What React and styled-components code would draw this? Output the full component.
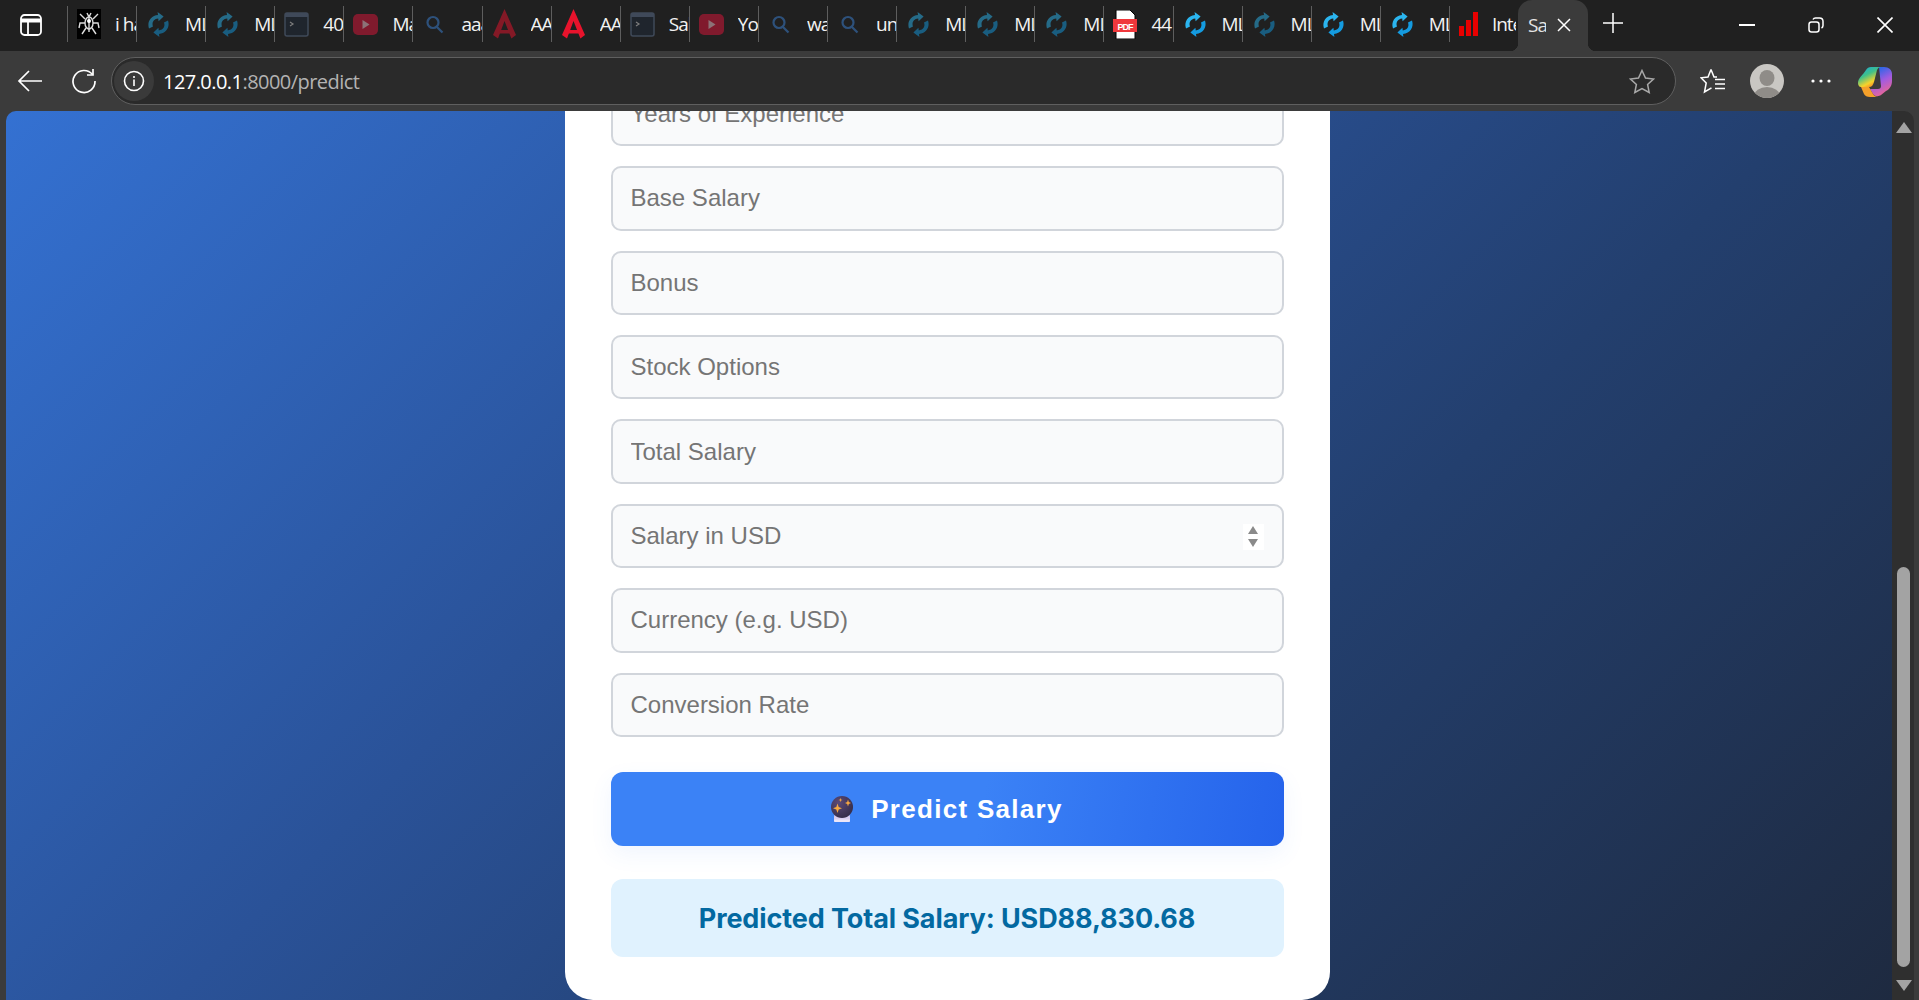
import styled, { createGlobalStyle } from "styled-components";

const GlobalStyle = createGlobalStyle`
  * { box-sizing: border-box; }
  html, body { margin: 0; height: 100%; overflow: hidden; background: #3b3b3b; }
  body { font-family: "Liberation Sans", Arial, sans-serif; }
`;

const Shell = styled.div`
  display: grid;
  grid-template-rows: 51px 60px 1fr;
  height: 100vh;
  width: 100vw;
`;

/* ---- tab strip ---- */
const Strip = styled.div`
  display: flex;
  align-items: stretch;
  background: #202020;
`;
const ToggleSlot = styled.div`
  width: 67px;
  display: flex;
  align-items: center;
  padding-left: 20px;
  padding-bottom: 2px;
`;
const Tab = styled.div`
  width: 69.1px;
  flex: none;
  display: flex;
  align-items: center;
  height: 36px;
  margin-top: 6px;
  padding-left: 9px;
  border-left: 1px solid #5e5e5e;
  overflow: hidden;
  color: #f2f2f2;
  font: 400 19px "Open Sans", sans-serif;
  letter-spacing: -1px;
  & > svg { flex: none; opacity: ${(p) => (p.$dim ? 0.5 : 1)}; }
`;
const TabLabel = styled.span`
  margin-left: 14px;
  width: 24px;
  overflow: hidden;
  white-space: nowrap;
`;
const ActiveTab = styled.div`
  position: relative;
  width: 70px;
  flex: none;
  display: flex;
  align-items: center;
  padding: 0 0 2px 10px;
  background: #3b3b3b;
  border-radius: 14px 14px 0 0;
  color: #e4e4e4;
  font: 400 19px "Open Sans", sans-serif;
  letter-spacing: -1px;
  &::before, &::after {
    content: "";
    position: absolute;
    bottom: 0;
    width: 8px;
    height: 8px;
  }
  &::before { left: -8px; background: radial-gradient(circle at 0 0, transparent 8px, #3b3b3b 8.5px); }
  &::after { right: -8px; background: radial-gradient(circle at 100% 0, transparent 8px, #3b3b3b 8.5px); }
`;
const ActiveLabel = styled.span`
  width: 18px;
  overflow: hidden;
  white-space: nowrap;
`;
const TabClose = styled.span`
  display: flex;
  margin-left: 11px;
`;
const NewTab = styled.div`
  display: flex;
  align-items: center;
  margin-left: 15px;
  padding-bottom: 5px;
`;
const WindowControls = styled.div`
  display: flex;
  margin-left: auto;
`;
const WindowButton = styled.div`
  width: 69px;
  display: flex;
  align-items: center;
  justify-content: center;
  padding-bottom: 2px;
`;

/* ---- toolbar ---- */
const Toolbar = styled.div`
  display: flex;
  align-items: center;
  background: #3b3b3b;
  padding-left: 8px;
`;
const NavButton = styled.div`
  width: 44px;
  height: 44px;
  display: flex;
  align-items: center;
  justify-content: center;
  margin-right: ${(p) => p.$gap || 0}px;
`;
const AddressBar = styled.div`
  width: 1565px;
  height: 48px;
  margin-left: 5px;
  display: flex;
  align-items: center;
  background: #2a2a2a;
  border: 1.5px solid #5f5f5f;
  border-radius: 24px;
  padding: 0 20px 0 2px;
`;
const InfoBadge = styled.div`
  width: 40px;
  height: 40px;
  border-radius: 50%;
  background: #3a3a3a;
  display: flex;
  align-items: center;
  justify-content: center;
`;
const Url = styled.div`
  margin-left: 9px;
  font: 400 20px "Open Sans", sans-serif;
  letter-spacing: -0.55px;
  color: #b3b3b3;
  flex: 1;
  white-space: nowrap;
`;
const Host = styled.span`
  color: #ffffff;
`;
const ToolIcons = styled.div`
  display: flex;
  margin-left: 10px;
`;
const ToolButton = styled.div`
  width: 54px;
  height: 44px;
  display: flex;
  align-items: center;
  justify-content: center;
`;

/* ---- page ---- */
const Content = styled.div`
  display: flex;
  padding: 0 5px 0 6px;
  min-height: 0;
`;
const Viewport = styled.main`
  flex: 1;
  min-width: 0;
  display: flex;
  flex-direction: column;
  align-items: center;
  justify-content: flex-end;
  overflow: hidden;
  border-radius: 10px 0 0 0;
  background: linear-gradient(135deg, #3471d2 0%, #2a5298 38%, #233f6e 65%, #1e2a40 100%);
  padding-right: 0;
`;
const Card = styled.div`
  flex: none;
  width: 765px;
  margin-right: 4px;
  padding: 0 46px 43px;
  background: #ffffff;
  border-radius: 0 0 28px 28px;
  display: flex;
  flex-direction: column;
`;
const Fields = styled.div`
  display: flex;
  flex-direction: column;
  gap: 20px;
`;
const Field = styled.div`
  position: relative;
`;
const Input = styled.input`
  display: block;
  width: 100%;
  height: 64.4px;
  padding: 0 18px;
  background: #f9fafb;
  border: 2px solid #d1d5db;
  border-radius: 10px;
  font: 400 24px "Liberation Sans", Arial, sans-serif;
  color: #111;
  outline: none;
  &::placeholder { color: #757575; opacity: 1; }
`;
const Spinner = styled.div`
  position: absolute;
  top: 20px;
  right: 20px;
  width: 21px;
  height: 26px;
  background: #ffffff;
  display: flex;
  flex-direction: column;
  align-items: center;
  justify-content: center;
  gap: 5px;
`;
const PredictButton = styled.button`
  margin-top: 35px;
  height: 74px;
  width: 100%;
  border: none;
  border-radius: 12px;
  background: linear-gradient(100deg, #3b82f6 0%, #3b82f6 55%, #2563eb 100%);
  box-shadow: 0 8px 22px rgba(59, 130, 246, 0.08);
  display: flex;
  align-items: center;
  justify-content: center;
  gap: 18px;
  color: #ffffff;
  font: 700 26px "Liberation Sans", Arial, sans-serif;
  letter-spacing: 1.3px;
`;
const Result = styled.div`
  margin-top: 33px;
  height: 78px;
  border-radius: 12px;
  background: #e0f2fe;
  color: #0369a1;
  display: flex;
  align-items: center;
  justify-content: center;
  font: 700 27px Inter, sans-serif;
  letter-spacing: -0.1px;
`;

/* ---- scrollbar ---- */
const ScrollTrack = styled.div`
  width: 22px;
  flex: none;
  background: #2f2f2f;
  border-radius: 0 10px 0 0;
  display: flex;
  flex-direction: column;
  align-items: center;
  padding: 11px 0 9px 1px;
`;
const ScrollThumb = styled.div`
  width: 13px;
  height: 400px;
  margin: 434px 0 13px;
  border-radius: 7px;
  background: #a3a3a3;
`;

/* ---- icons ---- */
const SyncIcon = () => (
  <svg width="25" height="25" viewBox="0 0 25 25">
    <path d="M3 16.5C.8 10 4.8 3.5 12 3l-.4-3 6 4.6-5 4.6-.4-2.6C7.5 7 5.6 10.800 7 14.500z" fill="#2bb5ef" />
    <path d="M22 8.500C24.200 15 20.200 21.500 13 22l.4 3-6-4.600 5-4.600.4 2.600c4.700-.4 6.600-4.200 5.200-7.900z" fill="#149be0" />
  </svg>
);
const SpiderIcon = () => (
  <svg width="24" height="30" viewBox="0 0 24 30">
    <rect width="24" height="30" fill="#000" />
    <g stroke="#ddd" strokeWidth="1.400" fill="none">
      <ellipse cx="12" cy="14" rx="4" ry="6" />
      <path d="M8 10 3 5M16 10l5-5M8 14H3l-1 5M16 14h5l1 5M9 19l-4 6M15 19l4 6M12 8v15M10 4l2 4 2-4" />
    </g>
    <circle cx="12" cy="12" r="2" fill="#fff" />
  </svg>
);
const TerminalIcon = () => (
  <svg width="25" height="25" viewBox="0 0 25 25" style={{ opacity: 0.6 }}>
    <rect x="1" y="1" width="23" height="23" rx="2" fill="#1f2937" stroke="#54657f" strokeWidth="1.500" />
    <rect x="1" y="1" width="23" height="4" fill="#54657f" />
    <path d="m6 10 3 2-3 2" stroke="#bbb" strokeWidth="1.200" fill="none" />
  </svg>
);
const YoutubeIcon = () => (
  <svg width="25" height="21" viewBox="0 0 25 21">
    <rect width="25" height="21" rx="5" fill="#e0163a" />
    <path d="m9.500 6 7 4.500-7 4.500z" fill="#fff" opacity=".75" />
  </svg>
);
const SearchIcon = () => (
  <svg width="25" height="25" viewBox="0 0 25 25" fill="none" stroke="#3b82d6" strokeWidth="2.200">
    <circle cx="11" cy="10.500" r="5.500" />
    <path d="m15 15 5.500 5.500" />
  </svg>
);
const AngularIcon = () => (
  <svg width="25" height="30" viewBox="0 0 25 30">
    <path d="M12.500 0 24 26l-4.600 3.500L12.500 12 6 29.500 1 26z" fill="#e8132c" />
    <path d="M8 21h9l1 3.500H7z" fill="#e8132c" />
  </svg>
);
const PdfIcon = () => (
  <svg width="24" height="29" viewBox="0 0 24 29">
    <path d="M3 0h14l5 5v24H3z" fill="#fff" stroke="#000" strokeWidth="1" />
    <rect x="0" y="9" width="24" height="13" fill="#f0383c" />
    <text x="12" y="19.500" textAnchor="middle" fontFamily="Liberation Sans" fontWeight="700" fontSize="9" fill="#fff">PDF</text>
  </svg>
);
const BarsIcon = () => (
  <svg width="19" height="24" viewBox="0 0 19 24" fill="#e80000">
    <rect x="0" y="14" width="5" height="10" />
    <rect x="7" y="8" width="5" height="16" />
    <rect x="14" y="0" width="5" height="24" />
  </svg>
);
const CrystalBall = () => (
  <svg width="22" height="26" viewBox="0 0 22 26">
    <defs>
      <radialGradient id="orb" cx="0.35" cy="0.3" r="0.9">
        <stop offset="0" stopColor="#5b4a78" />
        <stop offset="1" stopColor="#2e2740" />
      </radialGradient>
    </defs>
    <rect x="3" y="18.500" width="16" height="7.500" rx="2" fill="#d9cdf0" />
    <rect x="3" y="23.500" width="16" height="2.500" rx="1" fill="#ece6f8" />
    <circle cx="11" cy="11" r="11" fill="url(#orb)" />
    <path d="M6.500 7.500 7.700 11l3.300 1.200-3.300 1.200-1.200 3.500-1.200-3.500L2 12.200 5.300 11z" fill="#f5a742" />
    <path d="M17 3.500l.8 2.600 2.200.9-2.200.9-.8 2.600-.8-2.600L14 7l2.200-.9z" fill="#f5a742" />
    <path d="M9.500 1.800l.5 1.700 1.500.5-1.500.5-.5 1.700-.5-1.700L7.500 4 9 3.500z" fill="#f5a742" />
  </svg>
);
const CopilotIcon = () => (
  <svg width="34" height="31" viewBox="0 0 34 31">
    <defs>
      <linearGradient id="cpl" x1="0" y1="0" x2="0.6" y2="1">
        <stop offset="0" stopColor="#16a6e8" />
        <stop offset="0.45" stopColor="#3fc08a" />
        <stop offset="0.8" stopColor="#f6d32b" />
        <stop offset="1" stopColor="#f58b22" />
      </linearGradient>
      <linearGradient id="cpr" x1="0.3" y1="0" x2="0.7" y2="1">
        <stop offset="0" stopColor="#1668e8" />
        <stop offset="0.5" stopColor="#a35be0" />
        <stop offset="1" stopColor="#f4688a" />
      </linearGradient>
    </defs>
    <path d="M21 1h5c5 0 8 3 8 7v7c0 4-2 8-6 10l-5 4c-2 1.500-6 2-8-1l-3-5h8c2 0 3-1 3-3z" fill="url(#cpr)" />
    <path d="M8 4c1-2 3-3 5-3h10c-2 0-3 1-4 3l-3 12c-1 3-2 5-5 5H3c-2 0-3-2-3-4 0-5 5-8 8-13z" fill="url(#cpl)" />
    <path d="M3 21h8l4 7c1 2 3 3 5 3h-8c-3 0-5-1-6-3z" fill="#f5a02a" />
  </svg>
);

const tabs = [
  { icon: <SpiderIcon />, label: "i have" },
  { icon: <SyncIcon />, label: "MLflow", dim: true },
  { icon: <SyncIcon />, label: "MLflow", dim: true },
  { icon: <TerminalIcon />, label: "404" },
  { icon: <YoutubeIcon />, label: "Machine", dim: true },
  { icon: <SearchIcon />, label: "aaa", dim: true },
  { icon: <AngularIcon />, label: "AAA", dim: true },
  { icon: <AngularIcon />, label: "AAA" },
  { icon: <TerminalIcon />, label: "Salary" },
  { icon: <YoutubeIcon />, label: "YouTube", dim: true },
  { icon: <SearchIcon />, label: "watch", dim: true },
  { icon: <SearchIcon />, label: "unit", dim: true },
  { icon: <SyncIcon />, label: "MLflow", dim: true },
  { icon: <SyncIcon />, label: "MLflow", dim: true },
  { icon: <SyncIcon />, label: "MLflow", dim: true },
  { icon: <PdfIcon />, label: "44" },
  { icon: <SyncIcon />, label: "MLflow" },
  { icon: <SyncIcon />, label: "MLflow", dim: true },
  { icon: <SyncIcon />, label: "MLflow" },
  { icon: <SyncIcon />, label: "MLflow" },
  { icon: <BarsIcon />, label: "Intel" },
];

const fields = [
  "Years of Experience",
  "Base Salary",
  "Bonus",
  "Stock Options",
  "Total Salary",
  "Salary in USD",
  "Currency (e.g. USD)",
  "Conversion Rate",
];

const App = () => {
  return (
    <Shell>
      <GlobalStyle />
      <Strip>
        <ToggleSlot>
          <svg width="22" height="22" viewBox="0 0 22 22" fill="none" stroke="#fff" strokeWidth="1.800">
            <rect x="1" y="1" width="20" height="20" rx="3.500" />
            <path d="M1 6.500h20" strokeWidth="4" />
            <path d="M8 7v14" />
          </svg>
        </ToggleSlot>
        {tabs.map((t, i) => (
          <Tab key={i} $dim={t.dim}>
            {t.icon}
            <TabLabel>{t.label}</TabLabel>
          </Tab>
        ))}
        <ActiveTab>
          <ActiveLabel>Salary</ActiveLabel>
          <TabClose>
            <svg width="14" height="14" viewBox="0 0 14 14" stroke="#fff" strokeWidth="1.500">
              <path d="m1 1 12 12M13 1 1 13" />
            </svg>
          </TabClose>
        </ActiveTab>
        <NewTab>
          <svg width="20" height="20" viewBox="0 0 20 20" stroke="#fff" strokeWidth="1.500">
            <path d="M10 0v20M0 10h20" />
          </svg>
        </NewTab>
        <WindowControls>
          <WindowButton>
            <svg width="16" height="2" viewBox="0 0 16 2"><rect width="16" height="2" fill="#fff" /></svg>
          </WindowButton>
          <WindowButton>
            <svg width="16" height="16" viewBox="0 0 16 16" fill="none" stroke="#fff" strokeWidth="1.500">
              <rect x="1" y="5" width="10" height="10" rx="2.500" />
              <path d="M5 2.500C5.500 1.500 6.500 1 7.500 1h4C13.500 1 15 2.500 15 4.500v4c0 1-.5 2-1.500 2.500" />
            </svg>
          </WindowButton>
          <WindowButton>
            <svg width="16" height="16" viewBox="0 0 16 16" stroke="#fff" strokeWidth="1.600">
              <path d="m.5.500 15 15M15.500.500l-15 15" />
            </svg>
          </WindowButton>
        </WindowControls>
      </Strip>

      <Toolbar>
        <NavButton $gap={10}>
          <svg width="26" height="24" viewBox="0 0 26 24" fill="none" stroke="#fff" strokeWidth="1.700">
            <path d="M25 12H2M12 2 2 12l10 10" />
          </svg>
        </NavButton>
        <NavButton>
          <svg width="26" height="26" viewBox="0 0 26 26" fill="none" stroke="#fff" strokeWidth="1.700">
            <path d="M21.500 6.500A11 11 0 1 0 24 13" />
            <path d="M22 1v6h-6" />
          </svg>
        </NavButton>
        <AddressBar>
          <InfoBadge>
            <svg width="22" height="22" viewBox="0 0 22 22" fill="none" stroke="#fff" strokeWidth="1.600">
              <circle cx="11" cy="11" r="9.500" />
              <path d="M11 9.500v6.500M11 6v2" />
            </svg>
          </InfoBadge>
          <Url>
            <Host>127.0.0.1</Host>:8000/predict
          </Url>
          <svg width="26" height="25" viewBox="0 0 26 25" fill="none" stroke="#a8a8a8" strokeWidth="1.500">
            <path d="m13 1.500 3.500 7.500 8 1-5.900 5.500 1.600 8L13 19.500 5.800 23.500l1.600-8L1.500 10l8-1z" />
          </svg>
        </AddressBar>
        <ToolIcons>
          <ToolButton>
            <svg width="26" height="26" viewBox="0 0 26 26" fill="none" stroke="#fff" strokeWidth="1.500">
              <path d="M11 1.500 8 9l-7 .8 5.200 5.200L4.500 24l7-4.200M11 1.500 14 9h3" />
              <path d="M15 11.500h10M15 16h10M15 20.500h10" />
            </svg>
          </ToolButton>
          <ToolButton>
            <svg width="34" height="34" viewBox="0 0 34 34">
              <defs>
                <clipPath id="avatar"><circle cx="17" cy="17" r="17" /></clipPath>
              </defs>
              <circle cx="17" cy="17" r="17" fill="#c9c7c3" />
              <g clipPath="url(#avatar)" fill="#8f8c88">
                <ellipse cx="17" cy="14" rx="7.500" ry="8" />
                <ellipse cx="17" cy="32" rx="13" ry="9" />
              </g>
            </svg>
          </ToolButton>
          <ToolButton>
            <svg width="20" height="4" viewBox="0 0 20 4" fill="#fff">
              <circle cx="2" cy="2" r="1.600" />
              <circle cx="10" cy="2" r="1.600" />
              <circle cx="18" cy="2" r="1.600" />
            </svg>
          </ToolButton>
          <ToolButton>
            <CopilotIcon />
          </ToolButton>
        </ToolIcons>
      </Toolbar>

      <Content>
        <Viewport>
          <Card>
            <Fields>
              {fields.map((f) => (
                <Field key={f}>
                  <Input placeholder={f} />
                  {f === "Salary in USD" && (
                    <Spinner>
                      <svg width="10" height="8" viewBox="0 0 10 8"><path d="M5 0l5 8H0z" fill="#8a8a8a" /></svg>
                      <svg width="10" height="8" viewBox="0 0 10 8"><path d="M5 8 0 0h10z" fill="#8a8a8a" /></svg>
                    </Spinner>
                  )}
                </Field>
              ))}
            </Fields>
            <PredictButton>
              <CrystalBall />
              Predict Salary
            </PredictButton>
            <Result>Predicted Total Salary: USD88,830.68</Result>
          </Card>
        </Viewport>
        <ScrollTrack>
          <svg width="16" height="11" viewBox="0 0 16 11"><path d="M8 0l8 11H0z" fill="#a3a3a3" /></svg>
          <ScrollThumb />
          <svg width="16" height="11" viewBox="0 0 16 11"><path d="M8 11 0 0h16z" fill="#a3a3a3" /></svg>
        </ScrollTrack>
      </Content>
    </Shell>
  );
};

export default App;
